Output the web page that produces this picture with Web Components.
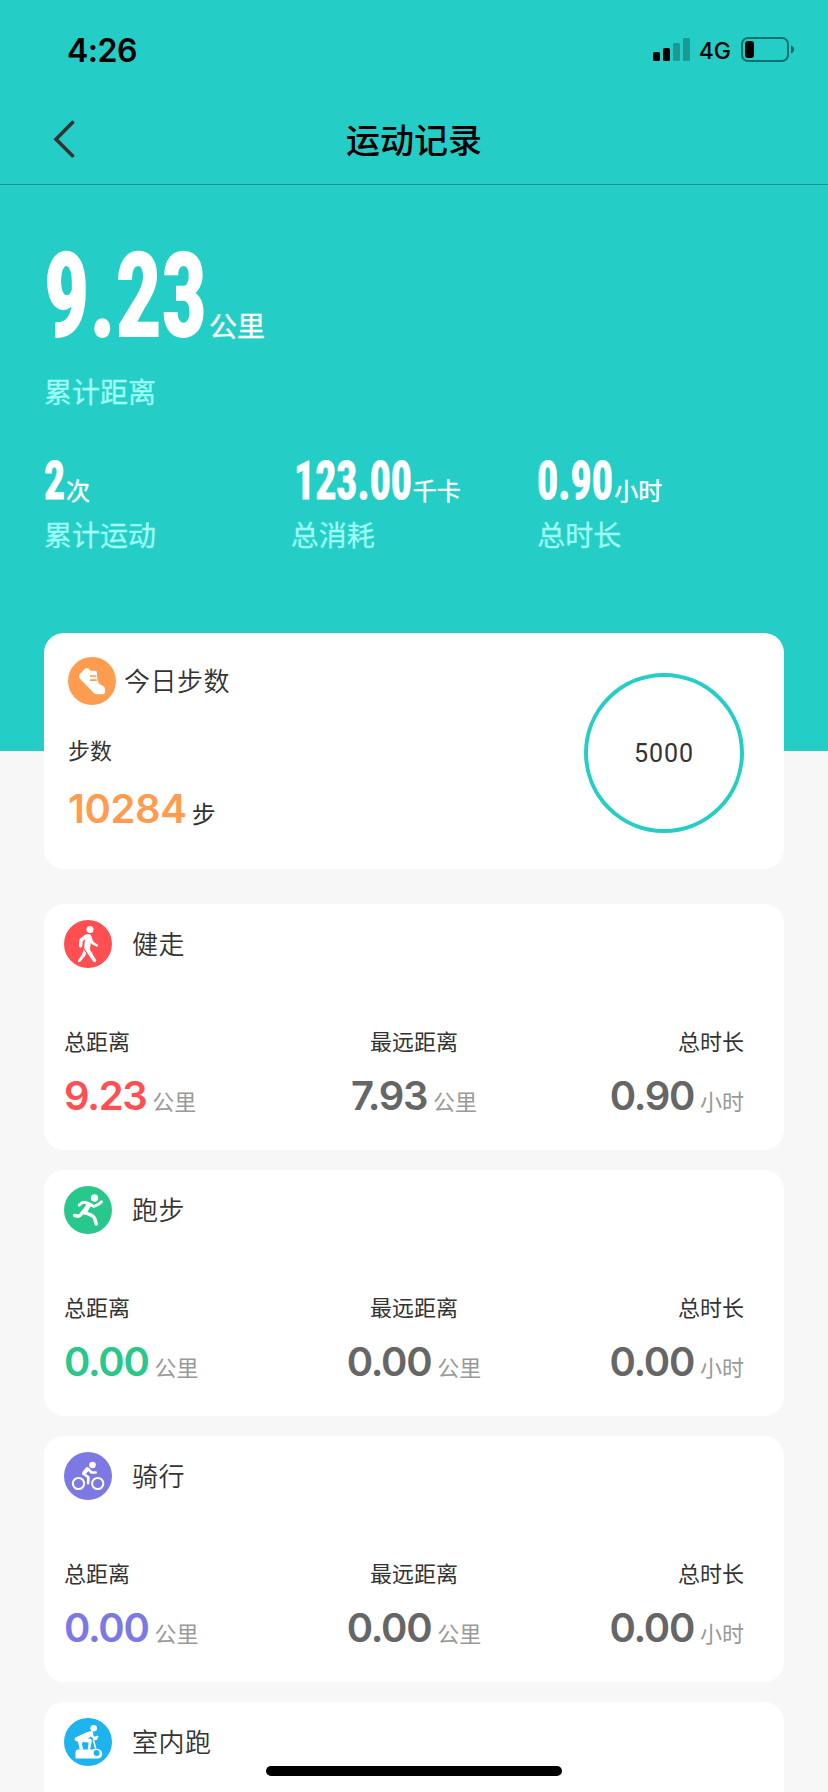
<!DOCTYPE html>
<html lang="zh-CN">
<head>
<meta charset="utf-8">
<title>运动记录</title>
<style>
  html, body {
    margin: 0;
    padding: 0;
  }
  body {
    width: 828px;
    height: 1792px;
    overflow: hidden;
    background: #f7f7f7;
    color: #333;
    font-family: "Noto Sans CJK SC", sans-serif;
    --teal: #24cec6;
    --digits: Inter, "Noto Sans CJK SC", sans-serif;
  }
</style>
</head>
<body>
<sport-page></sport-page>
<script>
const icons = {
  steps: /* html */`
    <circle cx="24" cy="24" r="24" fill="#ff9c50"/>
    <path fill="#fff" d="M11.600 17.200 17 11.800q1.700-1.500 3.500-.3l1.800 1.900c1 .8 4 .2 5.500.6 1.500.5 1 2 1.400 6.300.3 3.500.7 5.700 3 7.100l3.300 1.900q1.500.9 1.500 2.700v2.500q0 2.800-2.400 2.800h-6.200q-1.500 0-2.700-1.200L12 21.700q-1.600-2-.4-4.500z"/>
    <path stroke="#ff9c50" stroke-width="1.700" d="M22 19h6.200M22 23.200h6.700"/>`,
  walk: /* html */`
    <circle cx="24" cy="24" r="24" fill="#ff4f52"/>
    <circle cx="26" cy="9.400" r="3.500" fill="#fff"/>
    <path fill="#fff" d="M20.500 15.200q3.500-2.400 6.200-.2c1.500 1.500 1.500 5.500 3.100 7.100l3.700 2.300c1.300.9.300 2.900-1.300 2.200L27.500 24l-.7-1.200-.9 6.700 6.200 10.600c1 1.800-2 3-3.200 1.200L20.600 29q-.7-1.300-.4-3l.9-6.700-2.300 1.800-.6 5.200c-.2 1.800-3.400 1.500-3.300-.4l.5-5.800q.2-1.200 1.400-2.200z"/>
    <path fill="#fff" d="m19.700 29.400 2.500 3.800-1 2.600-4.700 5.700c-1.200 1.300-3.300.2-2.300-1.300l4-5.900z"/>`,
  run: /* html */`
    <circle cx="24" cy="24" r="24" fill="#28c78b"/>
    <circle cx="30.500" cy="12" r="3.700" fill="#fff"/>
    <g fill="none" stroke="#fff" stroke-linecap="round" stroke-linejoin="round">
      <path stroke-width="3" d="M15.300 19.100q3.400-3.700 7-2.500l4.700 2.100q2.300 2.300 4.700 1 3.600-1.300 5.800-3.900"/>
      <path stroke-width="5" d="m24.500 19.300-4.200 6.900"/>
      <path stroke-width="3.400" d="M19.500 25c-2.500 3.500-3.300 5.300-5.700 5.200L10.500 29.500"/>
      <path stroke-width="3.500" d="m22 27 6.200 2.700q2.400 1.200 2.700 3.500l1.400 4.800"/>
    </g>`,
  ride: /* html */`
    <circle cx="24" cy="24" r="24" fill="#7c79e4"/>
    <circle cx="28.500" cy="13" r="3.300" fill="#fff"/>
    <g fill="none" stroke="#fff">
      <circle cx="14.500" cy="31.500" r="5.600" stroke-width="2"/>
      <circle cx="33.700" cy="31.500" r="5.600" stroke-width="2"/>
      <g stroke-linecap="round" stroke-linejoin="round">
        <path stroke-width="3.800" d="m23.300 17-3.100 4"/>
        <path stroke-width="2.600" d="m24.300 17.300 3.300 3.200h4.100M19.400 21.700l5 3.600-.3 6"/>
      </g>
    </g>`,
  indoor: /* html */`
    <circle cx="24" cy="24" r="24" fill="#1db3ef"/>
    <circle cx="29.700" cy="10.300" r="3.300" fill="#fff"/>
    <path fill="#fff" d="M10.600 20.700q.4-1.500 3-2.200l8.500-4.100 5.100-1.500q2.200 0 2 2.200l-.1 2.200 1.900 1.500 2.600-1.400 1 1.300-1.700 2.400-2.400.5-3.900-3.200-2.900 2.200h2.800l1.400 2.200-1.900 9.300-2.300-.7 1-7-5.900-.5-1 2.200 1.500 5.500h-3.600L14 23.600q-3.900-.9-3.400-2.900z"/>
    <path fill="#fff" d="M11.500 34q0-2.500 2.300-2.500h14l2.500-.6h3a4.900 4.900 0 0 1 2.500 9.100l-1.500.4H11.500z"/>
    <circle cx="32.600" cy="35" r="3" fill="#1db3ef"/>
    <path fill="none" stroke="#fff" stroke-width="1.500" d="m29.200 21 2.700 10.400M29.200 21.500l4-.5"/>`
}

class SportIcon extends HTMLElement {
  constructor () {
    super()
    this.shadow = this.attachShadow({ mode: 'open' })
  }

  connectedCallback () {
    this.shadow.innerHTML = /* html */`
      <style>
        :host { display: block; width: 48px; height: 48px; flex: none; }
        svg { display: block; }
      </style>
      <svg width="48" height="48" viewBox="0 0 48 48">${icons[this.getAttribute('name')]}</svg>
    `
  }
}

class StatusBar extends HTMLElement {
  constructor () {
    super()
    this.shadow = this.attachShadow({ mode: 'open' })
  }

  connectedCallback () {
    this.shadow.innerHTML = /* html */`
      <style>
        :host {
          display: flex;
          align-items: center;
          box-sizing: border-box;
          height: 92px;
          padding: 7px 34px 0 67px;
          color: #000;
          font-family: var(--digits);
        }
        time { flex: 1; margin-top: 1px; font-size: 32px; font-weight: 600; letter-spacing: -.5px; }
        .network { margin: 2px 10px 0 9px; font-size: 23px; font-weight: 500; }
        svg { display: block; }
      </style>
      <time>4:26</time>
      <svg width="37" height="23" viewBox="0 0 37 23">
        <rect y="14" width="7" height="9" rx="1.500"/>
        <rect x="10" y="10" width="7" height="13" rx="1.500"/>
        <rect x="20" y="5" width="7" height="18" rx="1.500" opacity=".25"/>
        <rect x="30" width="7" height="23" rx="1.500" opacity=".25"/>
      </svg>
      <span class="network">4G</span>
      <svg width="53" height="25" viewBox="0 0 53 25">
        <rect x="1" y="1" width="46" height="23" rx="6" fill="none" stroke="#000" stroke-width="2" opacity=".45"/>
        <rect x="4" y="4" width="9" height="17" rx="3"/>
        <path d="M50 8.500q3 1.200 3 4t-3 4z" opacity=".5"/>
      </svg>
    `
  }
}

class NavBar extends HTMLElement {
  constructor () {
    super()
    this.shadow = this.attachShadow({ mode: 'open' })
  }

  connectedCallback () {
    this.shadow.innerHTML = /* html */`
      <style>
        :host {
          display: grid;
          grid-template-columns: 100px 1fr 100px;
          align-items: center;
          height: 92px;
          border-bottom: 1px solid #1c918c;
        }
        svg { display: block; margin: 2px 0 0 52px; }
        h1 {
          margin: 2px 0 0;
          color: #000;
          font-size: 34px;
          font-weight: 500;
          line-height: 50px;
          text-align: center;
        }
      </style>
      <svg width="24" height="38" viewBox="0 0 24 38" fill="none" stroke="#333" stroke-width="3.600" stroke-linecap="round">
        <path d="M20.500 2.500 4 19.200l16.500 16.500"/>
      </svg>
      <h1><slot></slot></h1>
    `
  }
}

// Narrow poster-style digits with a unit after them and a caption below
class TotalStat extends HTMLElement {
  constructor () {
    super()
    this.shadow = this.attachShadow({ mode: 'open' })
  }

  connectedCallback () {
    const big = this.hasAttribute('big')
    const width = this.getAttribute('width')
    const height = big ? 85 : 40
    this.shadow.innerHTML = /* html */`
      <style>
        :host { display: block; color: #fff; }
        .value { display: flex; align-items: baseline; line-height: 1; }
        svg { display: block; overflow: visible; margin-left: ${this.getAttribute('indent') || 0}px; }
        text {
          font-family: Roboto, sans-serif;
          font-weight: 700;
          font-stretch: 75%;
          fill: #fff;
          stroke: #fff;
          stroke-width: ${big ? 2 : 1}px;
        }
        .unit {
          font-size: ${big ? 28 : 24}px;
          margin-left: ${big ? 2 : 1}px;
          -webkit-text-stroke: .4px;
        }
        .caption {
          margin-top: ${big ? 32 : 12}px;
          color: #9ffff6;
          font-size: 28px;
          line-height: 40px;
          -webkit-text-stroke: .3px;
        }
      </style>
      <div class="value">
        <svg width="${width}" height="${height}">
          <text y="${big ? 84 : 39}" font-size="${big ? 116 : 54.5}">${this.getAttribute('value')}</text>
        </svg>
        <span class="unit">${this.getAttribute('unit')}</span>
      </div>
      <div class="caption"><slot></slot></div>
    `
    // squeeze the digits to the given width
    const text = this.shadow.querySelector('text')
    text.setAttribute('transform', `scale(${width / text.getComputedTextLength()} 1)`)
  }
}

class TotalPanel extends HTMLElement {
  constructor () {
    super()
    this.shadow = this.attachShadow({ mode: 'open' })
  }

  connectedCallback () {
    this.shadow.innerHTML = /* html */`
      <style>
        :host { display: block; padding: 67px 44px 0; }
        .row {
          display: grid;
          grid-template-columns: repeat(3, 1fr);
          margin-top: 49px;
        }
      </style>
      <total-stat big value="9.23" unit="公里" width="163">累计距离</total-stat>
      <div class="row">
        <total-stat value="2" unit="次" width="21">累计运动</total-stat>
        <total-stat value="123.00" unit="千卡" width="118" indent="3">总消耗</total-stat>
        <total-stat value="0.90" unit="小时" width="76">总时长</total-stat>
      </div>
    `
  }
}

class StepsCard extends HTMLElement {
  constructor () {
    super()
    this.shadow = this.attachShadow({ mode: 'open' })
  }

  connectedCallback () {
    this.shadow.innerHTML = /* html */`
      <style>
        :host {
          display: flex;
          justify-content: space-between;
          box-sizing: border-box;
          height: 236px;
          padding: 24px 40px 0 24px;
          border-radius: 20px;
          background: #fff;
        }
        .title { display: flex; align-items: center; gap: 8px; }
        h2 { margin: 0 0 3px; font-size: 26px; font-weight: 350; line-height: 36px; letter-spacing: .5px; }
        .label { margin-top: 29px; font-size: 22px; line-height: 30px; }
        .value { margin-top: 21px; font-size: 24px; line-height: 48px; }
        b {
          color: #ff9c50;
          font-family: var(--digits);
          font-size: 40px;
          font-weight: 600;
          letter-spacing: -.4px;
        }
        .ring {
          display: grid;
          place-items: center;
          box-sizing: border-box;
          width: 160px;
          height: 160px;
          margin-top: 16px;
          border: 4px solid var(--teal);
          border-radius: 50%;
          font-family: Roboto, sans-serif;
          font-size: 25px;
          letter-spacing: .9px;
        }
      </style>
      <div>
        <div class="title">
          <sport-icon name="steps"></sport-icon>
          <h2>今日步数</h2>
        </div>
        <div class="label">步数</div>
        <div class="value"><b>${this.getAttribute('steps')}</b> 步</div>
      </div>
      <div class="ring">${this.getAttribute('goal')}</div>
    `
  }
}

class SportCard extends HTMLElement {
  constructor () {
    super()
    this.shadow = this.attachShadow({ mode: 'open' })
  }

  connectedCallback () {
    this.shadow.innerHTML = /* html */`
      <style>
        :host {
          display: block;
          box-sizing: border-box;
          height: 246px;
          padding: 16px 20px 0;
          border-radius: 20px;
          background: #fff;
        }
        .title { display: flex; align-items: center; gap: 20px; }
        h2 { margin: 0 0 3px; font-size: 26px; font-weight: 350; line-height: 36px; letter-spacing: .5px; }
        .stats {
          display: grid;
          grid-template-columns: repeat(3, 1fr);
          margin-top: 57px;
          white-space: nowrap;
        }
        .stats div:nth-child(2) { text-align: center; }
        .stats div:nth-child(3) { text-align: right; padding-right: 20px; }
        .label { display: block; font-size: 22px; line-height: 30px; }
        .value { display: block; margin-top: 17px; color: #999; font-size: 22px; line-height: 48px; }
        b {
          margin-right: 1px;
          color: #666;
          font-family: var(--digits);
          font-size: 40px;
          font-weight: 600;
          letter-spacing: -1.3px;
        }
        .stats div:first-child b { color: ${this.getAttribute('color')}; }
      </style>
      <div class="title">
        <sport-icon name="${this.getAttribute('icon')}"></sport-icon>
        <h2><slot></slot></h2>
      </div>
      ${this.hasAttribute('total') ? this.stats() : ''}
    `
  }

  stats () {
    return /* html */`
      <div class="stats">
        <div>
          <span class="label">总距离</span>
          <span class="value"><b>${this.getAttribute('total')}</b> 公里</span>
        </div>
        <div>
          <span class="label">最远距离</span>
          <span class="value"><b>${this.getAttribute('longest')}</b> 公里</span>
        </div>
        <div>
          <span class="label">总时长</span>
          <span class="value"><b>${this.getAttribute('hours')}</b> 小时</span>
        </div>
      </div>
    `
  }
}

class SportPage extends HTMLElement {
  constructor () {
    super()
    this.shadow = this.attachShadow({ mode: 'open' })
  }

  connectedCallback () {
    this.shadow.innerHTML = /* html */`
      <style>
        :host {
          display: block;
          position: relative;
          height: 1792px;
          overflow: hidden;
        }
        header { height: 751px; background: var(--teal); }
        main {
          display: flex;
          flex-direction: column;
          gap: 20px;
          margin-top: -118px;
          padding: 0 44px;
        }
        steps-card { margin-bottom: 15px; }
        /* home indicator floats over the scrolled list */
        .home {
          position: absolute;
          left: 266px;
          bottom: 16px;
          width: 296px;
          height: 10px;
          border-radius: 5px;
          background: #000;
        }
      </style>
      <header>
        <status-bar></status-bar>
        <nav-bar>运动记录</nav-bar>
        <total-panel></total-panel>
      </header>
      <main>
        <steps-card steps="10284" goal="5000"></steps-card>
        <sport-card icon="walk" color="#ff4f52" total="9.23" longest="7.93" hours="0.90">健走</sport-card>
        <sport-card icon="run" color="#28c78b" total="0.00" longest="0.00" hours="0.00">跑步</sport-card>
        <sport-card icon="ride" color="#7c79e4" total="0.00" longest="0.00" hours="0.00">骑行</sport-card>
        <sport-card icon="indoor" color="#1db3ef">室内跑</sport-card>
      </main>
      <div class="home"></div>
    `
  }
}

customElements.define('sport-icon', SportIcon)
customElements.define('status-bar', StatusBar)
customElements.define('nav-bar', NavBar)
customElements.define('total-stat', TotalStat)
customElements.define('total-panel', TotalPanel)
customElements.define('steps-card', StepsCard)
customElements.define('sport-card', SportCard)
customElements.define('sport-page', SportPage)
</script>
</body>
</html>
